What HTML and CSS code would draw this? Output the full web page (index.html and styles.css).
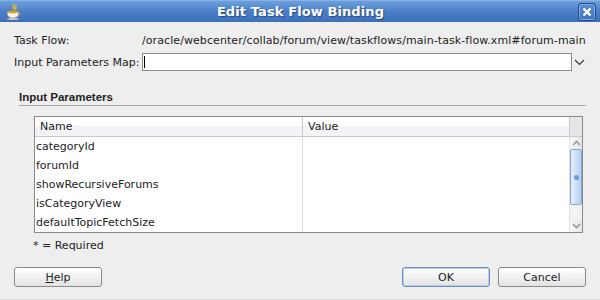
FILE: index.html
```html
<!DOCTYPE html>
<html lang="en">
<head>
    <meta charset="UTF-8">
    <meta name="viewport" content="width=device-width, initial-scale=1.0">
    <title>Edit Task Flow Binding</title>
    <link rel="stylesheet" href="styles.css">
</head>
<body>
    <div class="dialog">
        <div class="titlebar">
            <svg class="app-icon" width="18" height="18" viewBox="0 0 18 18">
                <path d="M9 1 C7 3 10 4 8 6 M11 2 C10 4 12 5 10 7" stroke="#e8c020" stroke-width="1.6" fill="none"/>
                <path d="M2 9 H14 C14 13 12 15 8 15 C4 15 2 13 2 9 Z" fill="#f4f4f0" stroke="#8a8a80" stroke-width="0.8"/>
                <ellipse cx="8" cy="9" rx="6" ry="1.5" fill="#d9a520"/>
                <path d="M14 10 C17 10 17 13 13 13" stroke="#8a8a80" stroke-width="1" fill="none"/>
                <ellipse cx="8" cy="16" rx="6" ry="1" fill="#c8c8c0"/>
            </svg>
            <div class="title">Edit Task Flow Binding</div>
            <div class="close-btn">
                <svg width="10" height="10" viewBox="0 0 10 10">
                    <path d="M1.5 1.5 L8.5 8.5 M8.5 1.5 L1.5 8.5" stroke="#fff" stroke-width="2.4"/>
                </svg>
            </div>
        </div>

        <div class="content">
            <div class="field-row first">
                <span class="field-label">Task Flow:</span>
                <span class="field-value">/oracle/webcenter/collab/forum/view/taskflows/main-task-flow.xml#forum-main</span>
            </div>
            <div class="field-row">
                <span class="field-label">Input Parameters Map:</span>
                <div class="combo">
                    <div class="combo-input"><span class="caret"></span></div>
                    <svg class="combo-arrow" width="11" height="7" viewBox="0 0 11 7">
                        <path d="M1 1 L5.5 5.5 L10 1" stroke="#333" stroke-width="1.1" fill="none"/>
                    </svg>
                </div>
            </div>

            <div class="section">
                <div class="section-title">Input Parameters</div>
                <div class="params-table">
                    <div class="thead">
                        <div class="th name-col">Name</div>
                        <div class="th value-col">Value</div>
                        <div class="th corner"></div>
                    </div>
                    <div class="tbody">
                        <div class="rows">
                            <div class="row"><div class="td name-col">categoryId</div><div class="td value-col"></div></div>
                            <div class="row"><div class="td name-col">forumId</div><div class="td value-col"></div></div>
                            <div class="row"><div class="td name-col">showRecursiveForums</div><div class="td value-col"></div></div>
                            <div class="row"><div class="td name-col">isCategoryView</div><div class="td value-col"></div></div>
                            <div class="row"><div class="td name-col">defaultTopicFetchSize</div><div class="td value-col"></div></div>
                        </div>
                        <div class="scrollbar">
                            <div class="scroll-btn">
                                <svg width="9" height="6" viewBox="0 0 9 6"><path d="M1 5 L4.5 1.5 L8 5" stroke="#999" stroke-width="1.6" fill="none"/></svg>
                            </div>
                            <div class="scroll-thumb"><span class="grip"></span></div>
                            <div class="scroll-track"></div>
                            <div class="scroll-btn">
                                <svg width="9" height="6" viewBox="0 0 9 6"><path d="M1 1 L4.5 4.5 L8 1" stroke="#999" stroke-width="1.6" fill="none"/></svg>
                            </div>
                        </div>
                    </div>
                </div>
                <div class="required">* = Required</div>
            </div>

            <div class="buttons">
                <button class="btn"><u>H</u>elp</button>
                <div class="spacer"></div>
                <button class="btn default">OK</button>
                <button class="btn">Cancel</button>
            </div>
        </div>
    </div>
</body>
</html>
```

FILE: styles.css
```css
body {
    margin: 0;
    font-family: "DejaVu Sans", sans-serif;
    font-size: 11px;
    color: #222;
    background-color: #eeeeee;
}
.dialog {
    width: 600px;
    height: 300px;
    box-sizing: border-box;
    border-bottom: 1px solid #d8d8d8;
    background-color: #eeeeee;
    overflow: hidden;
}
.titlebar {
    height: 22px;
    display: flex;
    align-items: center;
    background: linear-gradient(#6ea0dc, #4a7fc8 50%, #3e70ba);
    border-top: 1px solid #88b2e6;
    box-sizing: border-box;
}
.app-icon {
    margin-left: 5px;
}
.title {
    flex: 1;
    text-align: center;
    color: #fff;
    font-weight: bold;
    font-size: 13px;
    text-shadow: 1px 1px 1px #2a4a80;
    letter-spacing: 0.1px;
}
.close-btn {
    width: 16px;
    height: 16px;
    margin-right: 4px;
    border: 1px solid #24487e;
    border-radius: 3px;
    background: linear-gradient(#5a8ed2, #3f72bc);
    box-shadow: inset 0 0 0 1px #82aee4;
    display: flex;
    align-items: center;
    justify-content: center;
}
.content {
    padding: 0 14px;
}
.field-row {
    display: flex;
    align-items: center;
    height: 18px;
    margin-top: 4px;
}
.field-row.first {
    margin-top: 9px;
}
.field-label {
    width: 128px;
    flex-shrink: 0;
}
.field-value {
    white-space: nowrap;
    letter-spacing: 0.08px;
}
.combo {
    display: flex;
    align-items: center;
}
.combo-input {
    width: 428px;
    height: 16px;
    border: 1px solid #8c8c8c;
    background: #fff;
    display: flex;
    align-items: center;
}
.caret {
    width: 1px;
    height: 12px;
    margin-left: 1px;
    background: #000;
}
.combo-arrow {
    margin-left: 2px;
}
.section {
    padding-left: 5px;
    margin-top: 19px;
}
.section-title {
    font-family: "Liberation Sans", Arial, sans-serif;
    font-size: 11.5px;
    font-weight: bold;
    line-height: 15px;
    border-bottom: 1px solid #a8a8a8;
}
.params-table {
    margin-top: 10px;
    margin-left: 15px;
    width: 549px;
    box-sizing: border-box;
    border: 1px solid #8a8a8a;
    background: #fff;
}
.thead {
    display: flex;
    height: 19px;
    border-bottom: 1px solid #c8c8c8;
    background: linear-gradient(#ffffff 50%, #f3f3f7 50%);
}
.th {
    display: flex;
    align-items: center;
    padding-left: 5px;
    box-sizing: border-box;
}
.name-col {
    width: 268px;
    border-right: 1px solid #dcdcdc;
}
.value-col {
    width: 266px;
}
.thead .name-col {
    border-right-color: #c8c8c8;
}
.corner {
    flex: 1;
    background: #e6e6e6;
    border-left: 1px solid #c8c8c8;
}
.tbody {
    display: flex;
    height: 95px;
}
.rows {
    width: 534px;
}
.row {
    display: flex;
    height: 19px;
}
.td {
    display: flex;
    align-items: center;
    padding-left: 1px;
    box-sizing: border-box;
}
.scrollbar {
    flex: 1;
    display: flex;
    flex-direction: column;
    background: #f2f2f2;
    border-left: 1px solid #e0e0e0;
}
.scroll-btn {
    height: 12px;
    display: flex;
    align-items: center;
    justify-content: center;
    background: linear-gradient(to right, #f8f8f8, #e6e6e6);
}
.scroll-thumb {
    height: 56px;
    box-sizing: border-box;
    border: 1px solid #7fa6d6;
    border-radius: 2px;
    background: linear-gradient(to right, #e6f0fb, #b6cfee);
    display: flex;
    align-items: center;
    justify-content: center;
}
.grip {
    width: 5px;
    height: 5px;
    border-radius: 50%;
    background: #6f9ee0;
}
.scroll-track {
    flex: 1;
}
.required {
    margin-top: 6px;
    margin-left: 14px;
    line-height: 14px;
}
.buttons {
    display: flex;
    margin-top: 14px;
}
.spacer {
    flex: 1;
}
.btn {
    width: 88px;
    height: 20px;
    margin-left: 8px;
    font-family: "DejaVu Sans", sans-serif;
    font-size: 11px;
    color: #222;
    border: 1px solid #8a8a8a;
    border-radius: 3px;
    background: linear-gradient(#ffffff, #f2f2f2 50%, #e2e2e2);
    padding: 0;
}
.btn:first-child {
    margin-left: 0;
}
.btn.default {
    border-color: #6a8ebf;
    box-shadow: inset 0 0 0 1px #b8cfee;
}
```
